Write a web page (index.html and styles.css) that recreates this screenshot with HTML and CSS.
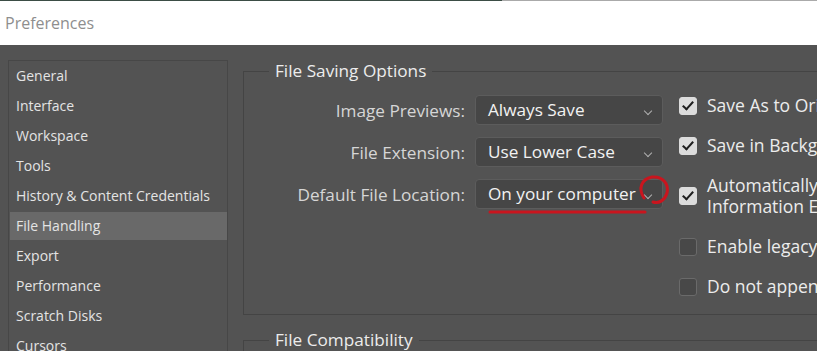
FILE: index.html
```html
<!DOCTYPE html>
<html lang="en">
  <head>
    <meta charset="UTF-8" />
    <meta name="viewport" content="width=device-width, initial-scale=1.0" />
    <title>Preferences</title>
    <link rel="stylesheet" href="styles.css">
  </head>
  <body>
    <!-- title bar -->
    <div class="titlebar">
      <div class="accent"></div>
      <div class="title">Preferences</div>
    </div>

    <div class="dialog">
      <!-- left category list -->
      <ul class="sidebar">
        <li>General</li>
        <li>Interface</li>
        <li>Workspace</li>
        <li>Tools</li>
        <li>History &amp; Content Credentials</li>
        <li class="active">File Handling</li>
        <li>Export</li>
        <li>Performance</li>
        <li>Scratch Disks</li>
        <li>Cursors</li>
      </ul>

      <div class="panel">
        <fieldset class="group">
          <legend>File Saving Options</legend>
          <div class="group-body">
            <div class="form">
              <label class="form-label">Image Previews:</label>
              <div class="select">Always Save<span class="chevron"></span></div>
              <label class="form-label">File Extension:</label>
              <div class="select">Use Lower Case<span class="chevron"></span></div>
              <label class="form-label">Default File Location:</label>
              <div class="select">On your computer<span class="chevron"></span></div>
            </div>

            <div class="checks">
              <div class="check"><span class="box checked"></span><span>Save As to Original Folder</span></div>
              <div class="check"><span class="box checked"></span><span>Save in Background</span></div>
              <div class="check"><span class="box checked"></span><span>Automatically Save Recovery<br>Information Every:</span></div>
              <div class="check"><span class="box"></span><span>Enable legacy "Save As"</span></div>
              <div class="check"><span class="box"></span><span>Do not append "copy" to filename</span></div>
            </div>
          </div>
        </fieldset>

        <fieldset class="group">
          <legend>File Compatibility</legend>
          <div class="group-body tall"></div>
        </fieldset>
      </div>
    </div>

    <!-- red marks drawn over the screenshot -->
    <svg class="marks" width="817" height="351" viewBox="0 0 817 351">
      <path d="M490 212 L645 212" stroke="#c9151e" stroke-width="3" stroke-linecap="round" fill="none" />
      <path d="M644 198 C638 189 641 179 652 177 C663 176 669 184 667 193 C665 200 659 204 653 202" stroke="#c9151e" stroke-width="3" stroke-linecap="round" fill="none" />
    </svg>
  </body>
</html>
```

FILE: styles.css
```css
/* base */
body {
  margin: 0;
  padding: 0;
  background-color: #535353;
  font-family: "Segoe UI", "Open Sans", sans-serif;
  font-size: 14px;
  color: #e4e4e4;
  width: 817px;
  height: 351px;
  overflow: hidden;
  position: relative;
}

/* window title */
.titlebar {
  height: 45px;
  background-color: #fff;
  display: flex;
  flex-direction: column;
}

.accent {
  height: 1px;
  background: linear-gradient(to right, #3b4d45 0 502px, #aaaaaa 502px);
}

.title {
  padding-left: 5px;
  line-height: 44px;
  font-size: 16px;
  color: #8e8e8e;
}

.dialog {
  display: flex;
  align-items: flex-start;
  gap: 15px;
  padding: 15px 0 0 8px;
}

/* category list */
.sidebar {
  list-style: none;
  margin: 0;
  padding: 1px 0 0 1px;
  width: 217px;
  height: 320px;
  border: 1px solid #474747;
  flex-shrink: 0;
}

.sidebar li {
  height: 28px;
  line-height: 28px;
  margin-bottom: 2px;
  padding-left: 6px;
  white-space: nowrap;
}

.sidebar li.active {
  background-color: #696969;
}

/* groups */
.panel {
  display: flex;
  flex-direction: column;
  gap: 14px;
}

.group {
  margin: 0;
  padding: 0;
  width: 640px;
  border: 1px solid #444;
}

.group legend {
  margin-left: 25px;
  padding: 0 6px;
  font-size: 17.2px;
  line-height: 22px;
  color: #ececec;
}

.group-body {
  display: flex;
  align-items: flex-start;
  padding: 13px 0 17px 0;
}

.group-body.tall {
  height: 60px;
}

/* label + dropdown grid */
.form {
  display: grid;
  grid-template-columns: 221px 188px;
  column-gap: 10px;
  row-gap: 12px;
  align-items: center;
}

.form-label {
  text-align: right;
  font-size: 17.2px;
  color: #d6d6d6;
  white-space: nowrap;
}

.select {
  position: relative;
  height: 28px;
  line-height: 28px;
  padding-left: 12px;
  background-color: #464646;
  border: 1px solid #5c5c5c;
  border-radius: 4px;
  color: #f2f2f2;
  font-size: 17.2px;
}

.chevron {
  position: absolute;
  right: 11px;
  top: 12px;
  width: 5px;
  height: 5px;
  border-right: 1px solid #b0b0b0;
  border-bottom: 1px solid #b0b0b0;
  transform: rotate(45deg);
}

/* checkbox column */
.checks {
  margin-left: 16px;
  display: flex;
  flex-direction: column;
  gap: 19px;
}

.check {
  display: flex;
  align-items: center;
  gap: 10px;
  line-height: 21px;
  font-size: 17.5px;
  color: #ececec;
  white-space: nowrap;
}

.box {
  width: 18px;
  height: 18px;
  box-sizing: border-box;
  border-radius: 3px;
  background-color: #484848;
  border: 1.5px solid #6a6a6a;
  flex-shrink: 0;
  position: relative;
}

.box.checked {
  background-color: #dcdcdc;
  border-color: #dcdcdc;
}

.box.checked::after {
  content: "";
  position: absolute;
  left: 5px;
  top: 1px;
  width: 4px;
  height: 9px;
  border-right: 2.5px solid #1e1e1e;
  border-bottom: 2.5px solid #1e1e1e;
  transform: rotate(42deg);
}

/* annotation overlay */
.marks {
  position: absolute;
  left: 0;
  top: 0;
  pointer-events: none;
}
```
